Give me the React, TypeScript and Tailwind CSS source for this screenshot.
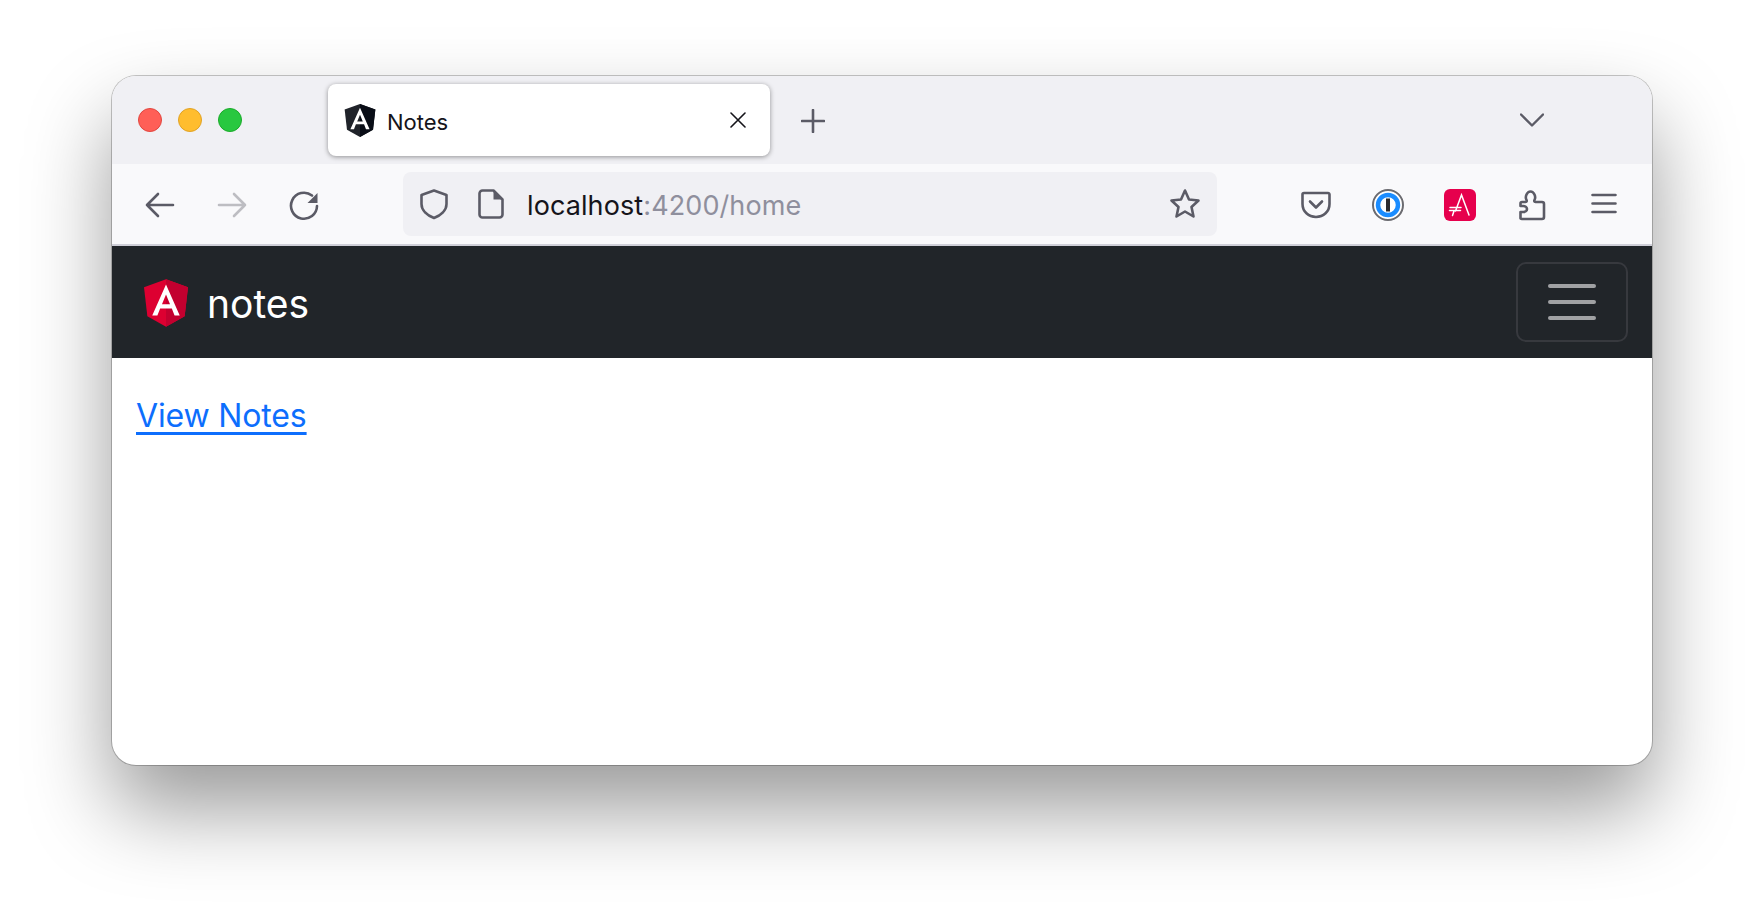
import React from 'react';

const ICON = '#5b5b66';

const AngularLogo = ({ dark, className }: { dark?: boolean; className: string }) => (
  <svg viewBox="31.9 30 186.2 200" className={className}>
    <polygon points="125,30 31.9,63.2 46.1,186.3 125,230 203.9,186.3 218.1,63.2" fill={dark ? '#20232a' : '#dd0031'} />
    <polygon points="125,30 125,230 203.9,186.3 218.1,63.2" fill={dark ? '#090d16' : '#c3002f'} />
    <path
      d="M125,52.1L66.8,182.6h21.7l11.7-29.2h49.4l11.7,29.2h21.7L125,52.1z M142,135.4H108l17-40.9L142,135.4z"
      fill="#fff"
    />
  </svg>
);

const Slot = ({ children, stroke = ICON }: { children: React.ReactNode; stroke?: string }) => (
  <svg
    viewBox="0 0 32 32"
    className="h-8 w-8 shrink-0"
    fill="none"
    stroke={stroke}
    strokeWidth="2.6"
    strokeLinecap="round"
    strokeLinejoin="round"
  >
    {children}
  </svg>
);

const TrafficLight = ({ color }: { color: string }) => <div className={`h-6 w-6 rounded-full border ${color}`} />;

const TabStrip = () => (
  <div className="flex h-[88px] shrink-0 bg-[#f0f0f4] pl-[26px] pt-2">
    <div className="mt-6 flex h-6 gap-4">
      <TrafficLight color="border-[#e2463f] bg-[#ff5f57]" />
      <TrafficLight color="border-[#e1a325] bg-[#ffbd2e]" />
      <TrafficLight color="border-[#1aab29] bg-[#28c840]" />
    </div>
    <div className="ml-[86px] flex h-[72px] w-[442px] items-center rounded-lg bg-white pl-4 shadow-[0_1px_5px_rgba(0,0,0,0.4)]">
      <AngularLogo dark className="h-[33px] w-8" />
      <span className="ml-[11px] mt-1 w-[60px] text-[22px] text-[#15141a]">Notes</span>
      <svg viewBox="0 0 16 16" className="ml-[283px] h-4 w-4" stroke="#15141a" strokeWidth="1.6" strokeLinecap="round">
        <path d="M1 1l14 14M15 1L1 15" />
      </svg>
    </div>
    <svg viewBox="0 0 24 24" className="ml-[31px] mt-[25px] h-6 w-6" stroke={ICON} strokeWidth="2.6" strokeLinecap="round">
      <path d="M12 1v22M1 12h22" />
    </svg>
    <svg
      viewBox="0 0 24 14"
      className="ml-[695px] mt-[29px] h-[14px] w-6"
      fill="none"
      stroke={ICON}
      strokeWidth="2.4"
      strokeLinecap="round"
      strokeLinejoin="round"
    >
      <path d="M1 1.5l11 11 11-11" />
    </svg>
  </div>
);

const Toolbar = () => (
  <div className="flex h-[80px] shrink-0 items-center bg-[#f9f9fb] pl-8">
    <div className="mt-0.5 flex gap-10">
      <Slot>
        <path d="M3 16h26M14 5L3 16l11 11" />
      </Slot>
      <Slot stroke="#bdbdc2">
        <path d="M29 16H3M18 5l11 11-11 11" />
      </Slot>
      <Slot>
        <path d="M29 17a13 13 0 1 1-5-10.500" />
        <path d="M29.500 4v10h-10z" fill={ICON} stroke="none" />
      </Slot>
    </div>
    <div className="ml-[83px] flex h-16 w-[814px] items-center rounded-lg bg-[#f0f0f4] pl-[15px] pr-4">
      <Slot>
        <path d="M16 2.500L3.500 7v9c0 6.500 6 11.500 12.500 14 6.500-2.500 12.500-7.500 12.500-14V7z" />
      </Slot>
      <svg viewBox="0 0 26 30" className="ml-[28px] h-[30px] w-[26px]" fill="none" stroke={ICON} strokeWidth="2.6" strokeLinejoin="round">
        <path d="M4.500 1.500h11l9 9v15a3 3 0 0 1-3 3h-17a3 3 0 0 1-3-3v-21a3 3 0 0 1 3-3z" />
        <path d="M15.500 1.500l9 9h-9z" fill={ICON} stroke="none" />
      </svg>
      <div className="ml-[23px] mt-[5px] text-[27px] tracking-[0.1px] text-[#15141a]">
        localhost<span className="text-[#8f8f9d]">:4200/home</span>
      </div>
      <div className="ml-auto">
        <Slot>
          <path d="M16 2.500l4 9 9.500 1-7 6.500 2 9.500L16 23.500 7.500 28.500l2-9.500-7-6.500 9.500-1z" />
        </Slot>
      </div>
    </div>
    <div className="ml-[83px] mt-px flex gap-10">
      <Slot>
        <path d="M4 4h24a1.500 1.500 0 0 1 1.500 1.500V15c0 7.500-6 13-13.500 13S2.500 22.500 2.500 15V5.500A1.500 1.500 0 0 1 4 4z" />
        <path d="M10 12.500l6 6 6-6" />
      </Slot>
      <svg viewBox="0 0 32 32" className="h-8 w-8 shrink-0">
        <circle cx="16" cy="16" r="15" fill="#fff" stroke="#6b6b70" strokeWidth="2" />
        <circle cx="16" cy="16" r="10" fill="#fff" stroke="#1a8cff" strokeWidth="4.500" />
        <rect x="14" y="9.500" width="4" height="13" fill="#2b2b2e" />
      </svg>
      <svg viewBox="0 0 32 32" className="h-8 w-8 shrink-0">
        <rect width="32" height="32" rx="6" fill="#e6004d" />
        <path
          d="M11.500 22L17.500 6 25 26M6 18.500h11M5.500 21.500h11M10 22l-1.500 4.500"
          fill="none"
          stroke="#fff"
          strokeWidth="1.500"
          strokeLinecap="round"
        />
      </svg>
      <Slot>
        <path d="M6 13h3.500c1.500 0 1.500-1.200.8-2.500-1.300-2.500.5-8 4.200-8s5.500 5.500 4.200 8C18 11.800 18 13 19.500 13H26a2 2 0 0 1 2 2v13a2 2 0 0 1-2 2H6a2 2 0 0 1-1.500-.7V23h3c2 0 3.500-1.500 3.500-3s-1.500-3-3.500-3h-3v-2.500C4.500 13.500 5 13 6 13z" />
      </Slot>
      <Slot>
        <path d="M4.500 6h23M4.500 14.500h23M4.500 23h23" />
      </Slot>
    </div>
  </div>
);

const Navbar = () => (
  <div className="flex h-[112px] shrink-0 items-center justify-between bg-[#212529] pl-8 pr-6">
    <div className="flex items-center">
      <AngularLogo className="mt-0.5 h-12 w-11" />
      <span className="ml-[19px] mt-1 text-[39px] leading-[60px] text-white">notes</span>
    </div>
    <div className="flex h-20 w-28 items-center justify-center rounded-[10px] border-2 border-[#37393e]">
      <div className="flex w-12 flex-col gap-3">
        <div className="h-1 rounded-sm bg-[#a0a1a3]" />
        <div className="h-1 rounded-sm bg-[#a0a1a3]" />
        <div className="h-1 rounded-sm bg-[#a0a1a3]" />
      </div>
    </div>
  </div>
);

const App = () => (
  <div className="h-[912px] overflow-hidden bg-white pl-[112px] pt-[76px] font-['Inter',sans-serif]">
    <div className="flex h-[689px] w-[1540px] flex-col overflow-hidden rounded-[24px] bg-white shadow-[0_0_0_1px_rgba(0,0,0,0.22),0_44px_84px_rgba(0,0,0,0.4)]">
      <TabStrip />
      <Toolbar />
      <div className="h-0.5 shrink-0 bg-[#cfcfd8]" />
      <Navbar />
      <div className="pl-6 pt-[34px]">
        <a href="#" className="text-[32px] leading-[48px] tracking-[-0.15px] text-[#0d6efd] underline decoration-[3px] underline-offset-[5px]">
          View Notes
        </a>
      </div>
    </div>
  </div>
);

export default App;
